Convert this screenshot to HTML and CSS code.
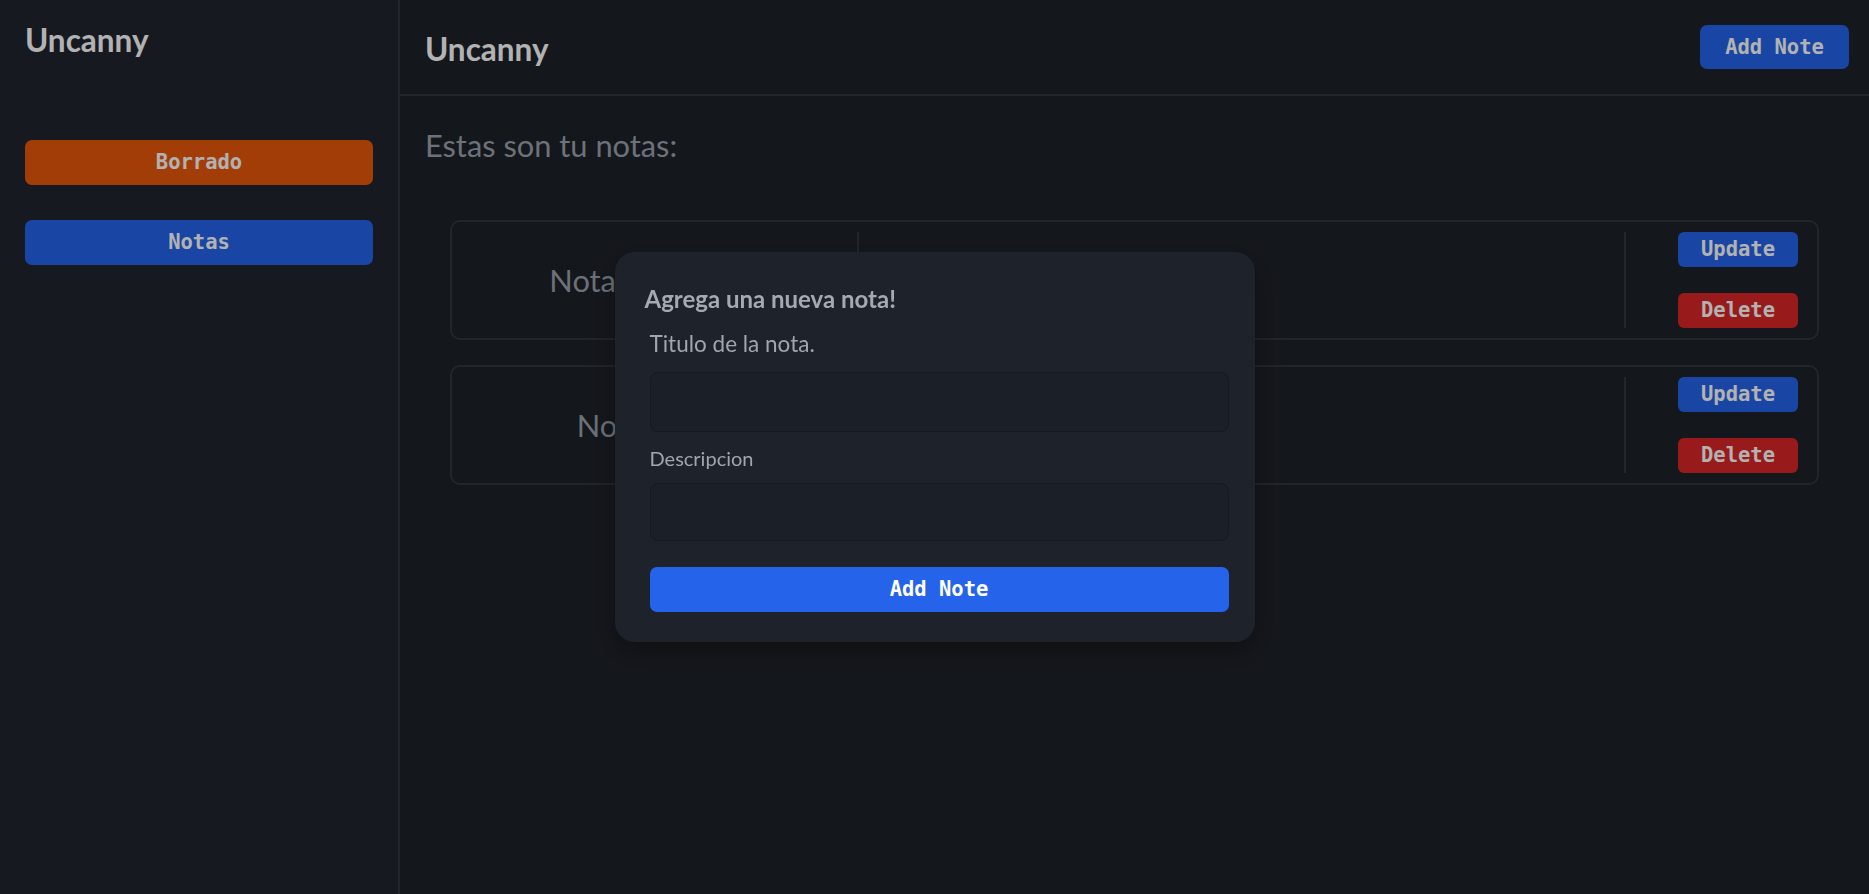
FILE: index.html
```html
<!DOCTYPE html>
<html lang="es">
<head>
<meta charset="utf-8">
<title>Uncanny</title>
<link rel="stylesheet" href="styles.css">
</head>
<body>
<div class="app">
  <aside class="sidebar">
    <h1 class="brand">Uncanny</h1>
    <nav class="side-nav">
      <button class="btn btn-orange side-btn">Borrado</button>
      <button class="btn btn-blue side-btn">Notas</button>
    </nav>
  </aside>
  <main class="main">
    <header class="topbar">
      <h2 class="topbar-title">Uncanny</h2>
      <button class="btn btn-blue top-btn">Add Note</button>
    </header>
    <section class="content">
      <h3 class="intro">Estas son tu notas:</h3>
      <div class="notes">
        <article class="note">
          <div class="note-title">Nota de prueba</div>
          <div class="note-body"></div>
          <div class="note-actions">
            <button class="btn btn-blue action-btn">Update</button>
            <button class="btn btn-red action-btn">Delete</button>
          </div>
        </article>
        <article class="note">
          <div class="note-title">Nota nueva</div>
          <div class="note-body"></div>
          <div class="note-actions">
            <button class="btn btn-blue action-btn">Update</button>
            <button class="btn btn-red action-btn">Delete</button>
          </div>
        </article>
      </div>
    </section>
  </main>
</div>
<div class="overlay">
  <div class="modal">
    <h4 class="modal-title">Agrega una nueva nota!</h4>
    <form class="modal-form">
      <label class="label label-lg" for="titulo">Titulo de la nota.</label>
      <input class="field field-title" id="titulo" type="text">
      <label class="label label-sm" for="desc">Descripcion</label>
      <input class="field field-desc" id="desc" type="text">
      <button class="btn btn-submit" type="button">Add Note</button>
    </form>
  </div>
</div>
</body>
</html>
```
FILE: styles.css
```css
* { box-sizing: border-box; }

html, body {
  margin: 0;
  padding: 0;
  height: 100%;
}

body {
  font-family: Lato, "Open Sans", sans-serif;
  background: #1e2229;
  color: #ffffff;
  overflow: hidden;
}

.app {
  display: flex;
  min-height: 100vh;
}

.btn {
  border: none;
  color: #ffffff;
  font-family: "DejaVu Sans Mono", "Liberation Mono", monospace;
  font-weight: 700;
  font-size: 20.5px;
  border-radius: 7px;
  padding: 0;
  cursor: pointer;
}

.btn-blue { background: #2563eb; }
.btn-orange { background: #ea580c; }
.btn-red { background: #dc2626; }

/* Sidebar */
.sidebar {
  width: 400px;
  flex: 0 0 400px;
  background: #21252f;
  border-right: 2px solid #323640;
  padding: 20px 25px;
}

.brand {
  margin: 0;
  font-size: 31.5px;
  line-height: 40px;
  font-weight: 700;
}

.side-nav {
  margin-top: 80px;
  display: flex;
  flex-direction: column;
  gap: 35px;
}

.side-btn {
  width: 100%;
  height: 45px;
  line-height: 45px;
}

/* Main */
.main {
  flex: 1;
  background: #1e2229;
}

.topbar {
  height: 96px;
  border-bottom: 2px solid #323640;
  padding: 0 20px 0 25px;
  display: flex;
  align-items: center;
  justify-content: space-between;
}

.topbar-title {
  margin: 4px 0 0;
  font-size: 31.5px;
  line-height: 40px;
  font-weight: 700;
}

.top-btn {
  width: 149px;
  height: 44px;
  line-height: 44px;
}

.content {
  padding-top: 30px;
}

.intro {
  margin: 0 0 0 25px;
  font-size: 30.8px;
  line-height: 40px;
  font-weight: 400;
  color: #9ca3af;
}

.notes {
  margin: 54px 50px 0;
  display: flex;
  flex-direction: column;
  gap: 25px;
}

.note {
  display: flex;
  border: 2px solid #31353e;
  border-radius: 10px;
  padding: 10px 19px 10px 0;
}

.note-title {
  flex: 0 0 407px;
  border-right: 2px solid #323640;
  display: flex;
  align-items: center;
  justify-content: center;
  font-size: 30.8px;
  color: #9ca3af;
}

.note-body {
  flex: 1;
  border-right: 2px solid #323640;
}

.note-actions {
  padding-left: 52px;
  display: flex;
  flex-direction: column;
  justify-content: space-between;
  gap: 26px;
}

.action-btn {
  width: 120px;
  height: 35px;
  line-height: 35px;
  border-radius: 6px;
}

/* Modal */
.overlay {
  position: fixed;
  inset: 0;
  background: rgba(0, 0, 0, 0.3);
  display: flex;
  align-items: center;
  justify-content: center;
}

.modal {
  width: 640px;
  background: #1e222a;
  border-radius: 20px;
  padding: 33px 26px 30px 30px;
  box-shadow: 0 10px 30px rgba(0, 0, 0, 0.35);
}

.modal-title {
  margin: 0;
  font-size: 24px;
  line-height: 28px;
  font-weight: 700;
  color: #a4a9b3;
}

.modal-form {
  margin-top: 17px;
  padding-left: 5px;
  display: flex;
  flex-direction: column;
}

.label {
  display: block;
  color: #a0a5af;
}

.label-lg {
  font-size: 22.5px;
  line-height: 28px;
}

.label-sm {
  margin-top: 14px;
  font-size: 20px;
  line-height: 25px;
}

.field {
  display: block;
  width: 100%;
  background: #1b1f27;
  border: 1px solid #161920;
  border-radius: 8px;
  color: #ffffff;
  font-family: Lato, sans-serif;
  font-size: 20px;
  padding: 0 14px;
  outline: none;
}

.field-title {
  margin-top: 14px;
  height: 60px;
}

.field-desc {
  margin-top: 12px;
  height: 58px;
}

.btn-submit {
  margin-top: 26px;
  width: 100%;
  height: 45px;
  line-height: 45px;
  background: #2563eb;
}
```
